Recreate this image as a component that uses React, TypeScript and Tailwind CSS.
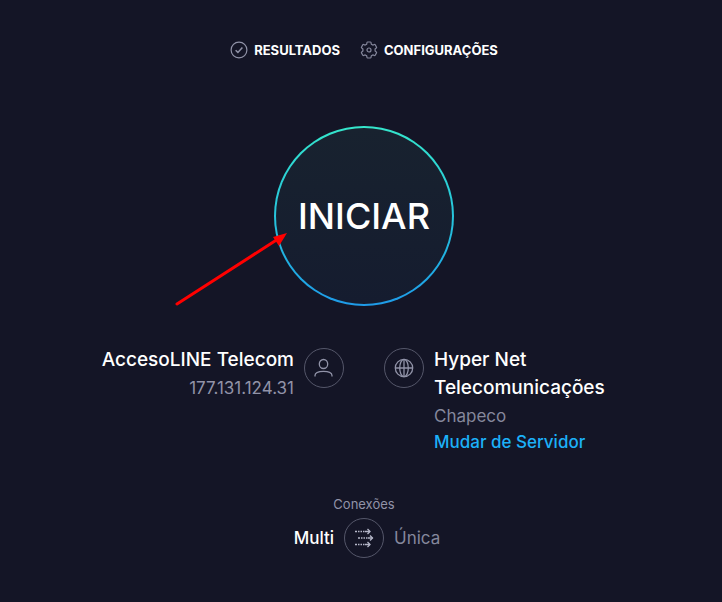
import { useState } from 'react'
import type { ReactNode } from 'react'

function CheckCircleIcon() {
  return (
    <svg width="18" height="18" viewBox="0 0 18 18" fill="none" stroke="#9193a8" strokeWidth="1.2" aria-hidden="true">
      <circle cx="9" cy="9" r="7.9" />
      <path d="M5.6 9.3 7.9 11.4 12.4 6.4" strokeWidth="1.5" />
    </svg>
  )
}

function GearIcon() {
  return (
    <svg width="18" height="18" viewBox="0 0 18 18" fill="none" stroke="#85879c" strokeWidth="1.2" strokeLinejoin="round" aria-hidden="true">
      <path d="M7.6 1h2.8q.5 0 .6.5l.3 1.7 1.5.9 1.6-.6q.5-.2.8.3l1.3 2.3q.3.5-.1.8L15.1 8v2l1.3 1.1q.4.3.1.8l-1.3 2.3q-.3.5-.8.3l-1.6-.6-1.5.9-.3 1.7q-.1.5-.6.5H7.6q-.5 0-.6-.5l-.3-1.7-1.5-.9-1.6.6q-.5.2-.8-.3L1.500 11.900q-.3-.5.1-.8L2.900 10V8L1.600 6.900q-.4-.3-.1-.8l1.300-2.300q.3-.5.8-.3l1.600.6 1.500-.9.3-1.700q.1-.5.6-.5z" />
      <circle cx="9" cy="9" r="2" />
    </svg>
  )
}

function UserIcon() {
  return (
    <svg width="20" height="20" viewBox="0 0 20 20" fill="none" stroke="#9193a8" strokeWidth="1.3" aria-hidden="true">
      <ellipse cx="9.5" cy="6" rx="4.2" ry="4.5" />
      <path d="M1 18.5v-1c0-3.1 3.5-4.2 8.5-4.2s8.5 1.1 8.5 4.2v1" />
    </svg>
  )
}

function GlobeIcon() {
  return (
    <svg width="20" height="20" viewBox="0 0 20 20" fill="none" stroke="#9193a8" strokeWidth="1.3" aria-hidden="true">
      <circle cx="10" cy="10" r="8.7" />
      <ellipse cx="10" cy="10" rx="4.3" ry="8.7" />
      <path d="M1.3 10h17.4M10 1.3v17.4" />
    </svg>
  )
}

function ArrowsIcon() {
  return (
    <svg width="20" height="20" viewBox="0 0 20 20" fill="none" stroke="#b4b6c8" strokeWidth="1.3" aria-hidden="true">
      <path d="M1 3.5h2M4 3.5h1.5M6.5 3.5H8M9 3.5h1.5M11 3.5h5" />
      <path d="M4 10h2M7 10h1.5M9.5 10H11M12 10h1.5M14 10h4.5" />
      <path d="M1 16.5h2M4 16.5h1.5M6.5 16.5H8M9 16.5h1.5M11 16.5h5" />
      <path d="m13.5 1 2.5 2.5L13.5 6M16 7.5l2.5 2.5-2.5 2.5M13.5 14l2.5 2.5-2.5 2.5" />
    </svg>
  )
}

function IconRing({ children }: { children: ReactNode }) {
  return (
    <span className="flex size-10 shrink-0 items-center justify-center rounded-full border border-[#55576a]">
      {children}
    </span>
  )
}

function StartButton() {
  return (
    <div className="relative">
      <button
        type="button"
        className="block rounded-full bg-linear-to-b from-[#35e6cb] via-[#27c4dc] to-[#1f9be8] p-0.5"
      >
        <span className="flex size-44 items-center justify-center rounded-full bg-linear-to-b from-[#18222f] to-[#151c2f] text-[36px] leading-10 font-medium text-white">
          INICIAR
        </span>
      </button>
      <svg
        className="pointer-events-none absolute top-26 -left-25"
        width="116"
        height="80"
        viewBox="0 0 116 80"
        aria-hidden="true"
      >
        <path d="M3 74 104 9" stroke="#ff0000" strokeWidth="3" strokeLinecap="round" />
        <path d="M113 3 99 7 105 16z" fill="#ff0000" />
      </svg>
    </div>
  )
}

export default function App() {
  const [multi, setMulti] = useState(true)

  return (
    <div className="min-h-screen bg-[#141526] pt-10 pb-10 pl-1.5 font-['Inter',sans-serif] text-white">
      <nav className="flex justify-center gap-5 text-[13px] leading-5 font-bold">
        <a href="#resultados" className="flex items-center gap-1.5">
          <CheckCircleIcon />
          RESULTADOS
        </a>
        <a href="#configuracoes" className="flex items-center gap-1.5">
          <GearIcon />
          CONFIGURAÇÕES
        </a>
      </nav>

      <main>
        <div className="mt-16 flex justify-center pt-0.5">
          <StartButton />
        </div>

        <div className="mt-10 grid grid-cols-2 gap-10">
          <section className="flex justify-end gap-2.5">
            <div className="text-right">
              <h2 className="text-[19px] leading-7 font-medium">AccesoLINE Telecom</h2>
              <p className="text-[17px] leading-7 text-[#9193a8]">177.131.124.31</p>
            </div>
            <div className="pt-0.5">
              <IconRing>
                <UserIcon />
              </IconRing>
            </div>
          </section>

          <section className="flex gap-2.5">
            <div className="pt-0.5">
              <IconRing>
                <GlobeIcon />
              </IconRing>
            </div>
            <div>
              <h2 className="max-w-48 text-[19px] leading-7 font-medium">Hyper Net Telecomunicações</h2>
              <p className="text-[17px] leading-7 text-[#85879c]">Chapeco</p>
              <a href="#servidor" className="block text-[17px] leading-6 font-medium text-[#1cb0f8]">
                Mudar de Servidor
              </a>
            </div>
          </section>
        </div>

        <section className="mt-10">
          <h3 className="text-center text-[13px] leading-5 text-[#9193a8]">Conexões</h3>
          <div className="mt-1 grid grid-cols-[1fr_auto_1fr] items-center gap-2.5 text-[17px] leading-6">
            <button
              type="button"
              onClick={() => setMulti(true)}
              className={`justify-self-end ${multi ? 'font-medium text-white' : 'text-[#85879c]'}`}
            >
              Multi
            </button>
            <button type="button" aria-label="Alternar conexões" onClick={() => setMulti(!multi)}>
              <IconRing>
                <ArrowsIcon />
              </IconRing>
            </button>
            <button
              type="button"
              onClick={() => setMulti(false)}
              className={`justify-self-start ${multi ? 'text-[#85879c]' : 'font-medium text-white'}`}
            >
              Única
            </button>
          </div>
        </section>
      </main>
    </div>
  )
}
